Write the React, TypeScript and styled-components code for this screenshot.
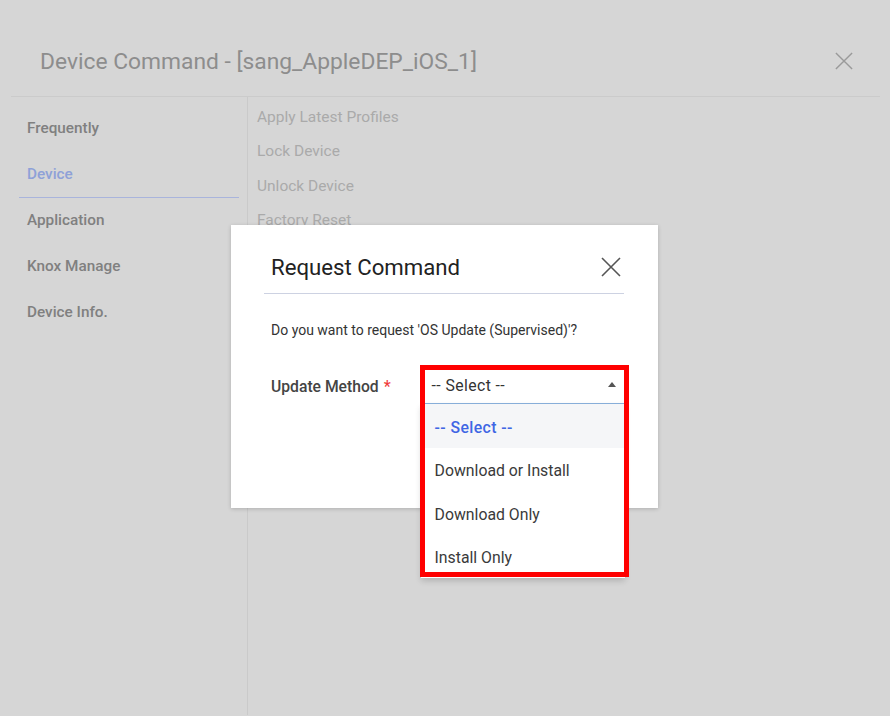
import styled, { createGlobalStyle } from 'styled-components';

const GlobalStyle = createGlobalStyle`
  html, body {
    margin: 0;
    padding: 0;
    background: #d6d6d6;
  }
  body {
    font-family: Roboto, "Liberation Sans", Arial, sans-serif;
  }
  * {
    box-sizing: border-box;
  }
`;

const Page = styled.div`
  position: relative;
  width: 890px;
  height: 716px;
  overflow: hidden;
  background: #d6d6d6;
`;

const Header = styled.div`
  display: flex;
  align-items: center;
  justify-content: space-between;
  height: 97px;
  margin: 0 10px 0 11px;
  padding: 26px 27px 0 29px;
  border-bottom: 1px solid #cbcbcb;
`;

const Title = styled.h1`
  margin: 0;
  font-size: 22.8px;
  font-weight: 400;
  color: #8d8d8d;
`;

const Body = styled.div`
  display: flex;
  margin-left: 11px;
  height: 618px;
`;

const Sidebar = styled.ul`
  width: 237px;
  margin: 0;
  padding: 8.5px 0 0;
  list-style: none;
  border-right: 1px solid #cacaca;
`;

const SideItem = styled.li<{ $active?: boolean }>`
  height: 46px;
  margin: 0 8px;
  padding-left: 8px;
  display: flex;
  align-items: center;
  font-size: 15.3px;
  font-weight: 500;
  color: ${p => (p.$active ? '#8ea1d8' : '#808080')};
  border-bottom: 1px solid ${p => (p.$active ? '#a9b4dc' : 'transparent')};
`;

const CommandList = styled.ul`
  margin: 0;
  padding: 3px 0 0 9px;
  list-style: none;
`;

const CommandItem = styled.li`
  height: 34.4px;
  line-height: 34.4px;
  font-size: 15.5px;
  color: #aaaaaa;
`;

const Modal = styled.div`
  position: absolute;
  left: 231px;
  top: 225px;
  width: 427px;
  height: 283px;
  background: #ffffff;
  padding: 0 34px 0 33px;
  box-shadow: 0 1px 4px rgba(0, 0, 0, 0.18);
`;

const ModalHeader = styled.div`
  display: flex;
  align-items: center;
  justify-content: space-between;
  padding: 28px 3px 12px 7px;
  border-bottom: 1px solid #cdd2e2;
`;

const ModalTitle = styled.h2`
  margin: 0;
  font-size: 22.2px;
  line-height: 28px;
  font-weight: 400;
  color: #222222;
`;

const Message = styled.p`
  margin: 26px 0 0 7px;
  font-size: 14px;
  line-height: 20px;
  color: #333333;
`;

const FormRow = styled.div`
  display: flex;
  align-items: center;
  margin: 26px 0 0 7px;
`;

const Label = styled.label`
  width: 150px;
  padding-top: 2px;
  font-size: 15.7px;
  font-weight: 500;
  color: #444444;
`;

const Required = styled.span`
  color: #f03c3c;
  margin-left: 5px;
`;

const SelectWrap = styled.div`
  position: relative;
  width: 204px;
`;

const SelectBox = styled.div`
  display: flex;
  align-items: center;
  justify-content: space-between;
  height: 38px;
  padding: 2px 8px 0 10px;
  border-left: 1px solid #7aa6d8;
  border-bottom: 1px solid #8ab2de;
  font-size: 15.8px;
  letter-spacing: 0.4px;
  color: #333333;
`;

const Caret = styled.span`
  width: 0;
  height: 0;
  border-left: 4.5px solid transparent;
  border-right: 4.5px solid transparent;
  border-bottom: 5px solid #555555;
  margin-top: -2px;
`;

const Dropdown = styled.ul`
  position: absolute;
  left: 0;
  top: 38px;
  width: 204px;
  margin: 0;
  padding: 0;
  list-style: none;
  background: #ffffff;
  box-shadow: 0 3px 6px rgba(0, 0, 0, 0.16);
`;

const Option = styled.li<{ $selected?: boolean }>`
  height: 43.5px;
  display: flex;
  align-items: center;
  padding: 3px 0 0 14px;
  font-size: 15.8px;
  font-weight: ${p => (p.$selected ? 500 : 400)};
  letter-spacing: ${p => (p.$selected ? '0.4px' : '0')};
  color: ${p => (p.$selected ? '#3f66e4' : '#3a3a3a')};
  background: ${p => (p.$selected ? '#f5f6f8' : '#ffffff')};
`;

const Highlight = styled.div`
  position: absolute;
  left: -1px;
  top: -1px;
  width: 209px;
  height: 212px;
  border: 5px solid #ff0000;
  pointer-events: none;
`;

const CloseIcon = ({ size, color }: { size: number; color: string }) => (
  <svg width={size} height={size} viewBox="0 0 20 20" fill="none">
    <path d="M1 1L19 19M19 1L1 19" stroke={color} strokeWidth="1.6" />
  </svg>
);

const sideItems = ['Frequently', 'Device', 'Application', 'Knox Manage', 'Device Info.'];
const commands = ['Apply Latest Profiles', 'Lock Device', 'Unlock Device', 'Factory Reset'];
const options = ['-- Select --', 'Download or Install', 'Download Only', 'Install Only'];

const App = () => {
  return (
    <>
      <GlobalStyle />
      <Page>
        <Header>
          <Title>Device Command - [sang_AppleDEP_iOS_1]</Title>
          <CloseIcon size={18} color="#9a9a9a" />
        </Header>
        <Body>
          <Sidebar>
            {sideItems.map(item => (
              <SideItem key={item} $active={item === 'Device'}>{item}</SideItem>
            ))}
          </Sidebar>
          <CommandList>
            {commands.map(cmd => (
              <CommandItem key={cmd}>{cmd}</CommandItem>
            ))}
          </CommandList>
        </Body>

        <Modal>
          <ModalHeader>
            <ModalTitle>Request Command</ModalTitle>
            <CloseIcon size={20} color="#555555" />
          </ModalHeader>
          <Message>Do you want to request 'OS Update (Supervised)'?</Message>
          <FormRow>
            <Label>
              Update Method<Required>*</Required>
            </Label>
            <SelectWrap>
              <SelectBox>
                -- Select --
                <Caret />
              </SelectBox>
              <Dropdown>
                {options.map((opt, i) => (
                  <Option key={opt} $selected={i === 0}>{opt}</Option>
                ))}
              </Dropdown>
              <Highlight />
            </SelectWrap>
          </FormRow>
        </Modal>
      </Page>
    </>
  );
};

export default App;
